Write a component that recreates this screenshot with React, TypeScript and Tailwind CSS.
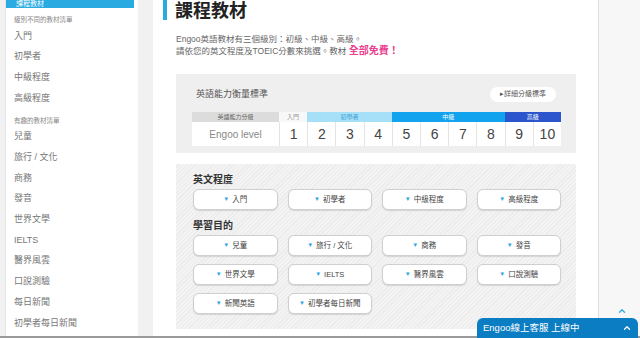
import { ChevronUp } from "lucide-react";

const font = { fontFamily: '"Liberation Sans", "Noto Sans CJK TC", sans-serif' };

type Row = { label: string; header?: boolean };

const sideRows: Row[] = [
  { label: "級別不同的教材清單", header: true },
  { label: "入門" },
  { label: "初學者" },
  { label: "中級程度" },
  { label: "高級程度" },
  { label: "有趣的教材清單", header: true },
  { label: "兒童" },
  { label: "旅行 / 文化" },
  { label: "商務" },
  { label: "發音" },
  { label: "世界文學" },
  { label: "IELTS" },
  { label: "醫界風雲" },
  { label: "口說測驗" },
  { label: "每日新聞" },
  { label: "初學者每日新聞" },
];

const levels = ["入門", "初學者", "中級程度", "高級程度"];
const topics = ["兒童", "旅行 / 文化", "商務", "發音", "世界文學", "IELTS", "醫界風雲", "口說測驗", "新聞英語", "初學者每日新聞"];

function Sidebar() {
  return (
    <div className="ml-[5px] w-[133px] shrink-0 bg-white border-l border-[#e6e6e6] flex flex-col">
      <div className="h-[8px] w-[128px] bg-[#29abe2] text-white text-[7px] leading-[8px] pl-[10px] overflow-hidden">
        課程教材
      </div>
      {sideRows.map((r) =>
        r.header ? (
          <div key={r.label} className="h-[18px] pt-[7px] pl-[8px] text-[6.5px] text-[#888]">
            {r.label}
          </div>
        ) : (
          <div key={r.label} className="h-[20.7px] flex items-center pl-[8px] text-[9px] text-[#777]">
            {r.label}
          </div>
        )
      )}
    </div>
  );
}

function Pill({ label }: { label: string }) {
  return (
    <button className="h-[21px] bg-white border border-[#cfcfcf] rounded-[6px] shadow-[0_1px_1px_rgba(0,0,0,0.12)] flex items-center justify-center gap-[3px] text-[7.5px] text-[#444]">
      <span className="text-[#2ba6de] text-[6px]">▼</span>
      {label}
    </button>
  );
}

function LevelTable() {
  const nums = [1, 2, 3, 4, 5, 6, 7, 8, 9, 10];
  return (
    <div className="mt-[10px] w-[369px] text-[6px]">
      <div className="flex h-[10px] leading-[10px] text-center">
        <div className="w-[87px] bg-[#dcdcdc] text-[#666]">英語能力分級</div>
        <div className="w-[28.2px] bg-[#f8f8f8] text-[#999]">入門</div>
        <div className="w-[84.6px] bg-[#a5e0f8] text-[#3d9fd4]">初學者</div>
        <div className="w-[112.8px] bg-[#12a3ee] text-white">中級</div>
        <div className="w-[56.4px] bg-[#2a55cc] text-white">高級</div>
      </div>
      <div className="grid grid-cols-[87px_repeat(10,minmax(0,1fr))] gap-x-px bg-[#e4e4e4] h-[24px]">
        <div className="bg-white flex items-center justify-center text-[10px] text-[#888]">Engoo level</div>
        {nums.map((n) => (
          <div key={n} className="bg-white flex items-center justify-center text-[14px] text-[#444]">
            {n}
          </div>
        ))}
      </div>
    </div>
  );
}

export default function App() {
  return (
    <div className="relative w-[640px] h-[338px] overflow-hidden bg-[#f1f1f1] flex flex-col" style={font}>
      <div className="flex h-[336px]">
        <Sidebar />
        <div className="w-[15px] shrink-0" />
        <div className="w-[445px] shrink-0 bg-white pl-[23px] pr-[22px] flex flex-col">
          <div className="flex items-center h-[22px] -ml-[13px]">
            <div className="w-[4px] h-[20px] self-start bg-[#29abe2]" />
            <h1 className="ml-[8px] text-[18px] font-bold text-[#222] leading-none">課程教材</h1>
          </div>
          <div className="mt-[12px] text-[8.5px] leading-[11px] text-[#666]">
            <p>Engoo英語教材有三個級別：初級、中級、高級。</p>
            <p>
              請依您的英文程度及TOEIC分數來挑選。教材{" "}
              <span className="text-[#e9408f] font-bold text-[10px]">全部免費！</span>
            </p>
          </div>
          <div className="mt-[17px] h-[79px] bg-[#efefef] pl-[16px] pt-[13px]">
            <div className="flex items-center justify-between pr-[20px]">
              <span className="pl-[4px] text-[9px] text-[#555]">英語能力衡量標準</span>
              <span className="h-[15px] w-[66px] rounded-full bg-white flex items-center justify-center text-[7px] text-[#555]">
                ▸詳細分級標準
              </span>
            </div>
            <LevelTable />
          </div>
          <div className="mt-[11px] h-[165px] bg-[repeating-linear-gradient(135deg,#f3f3f3_0px,#f3f3f3_2px,#ebebeb_2px,#ebebeb_3px)] pl-[17px] pr-[15px] pt-[9px]">
            <h2 className="h-[14px] text-[10px] font-bold text-[#333] leading-[14px]">英文程度</h2>
            <div className="mt-[2px] grid grid-cols-4 gap-x-[10px]">
              {levels.map((l) => (
                <Pill key={l} label={l} />
              ))}
            </div>
            <h2 className="mt-[9px] h-[14px] text-[10px] font-bold text-[#333] leading-[14px]">學習目的</h2>
            <div className="mt-[2px] grid grid-cols-4 gap-x-[10px] gap-y-[8px]">
              {topics.map((t) => (
                <Pill key={t} label={t} />
              ))}
            </div>
          </div>
        </div>
        <div className="flex-1 bg-[#f7f7f7] border-l border-[#dedede]" />
      </div>
      <div className="h-[2px] bg-[#9a9a9a]" />
      <ChevronUp className="absolute left-[617px] top-[306px] text-[#29abe2]" size={10} strokeWidth={3} />
      <div className="absolute left-[477px] top-[318px] w-[161px] h-[20px] bg-[#0b7dc2] rounded-t-[6px] flex items-center justify-between pl-[6px] pr-[6px] text-white">
        <span className="text-[9.5px]">Engoo線上客服 上線中</span>
        <ChevronUp size={10} strokeWidth={3} />
      </div>
    </div>
  );
}
